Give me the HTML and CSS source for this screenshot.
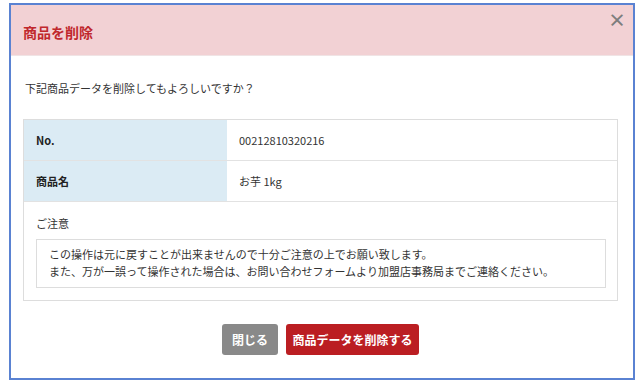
FILE: index.html
```html
<!DOCTYPE html>
<html lang="ja">
<head>
<meta charset="utf-8">
<link rel="stylesheet" href="styles.css">
</head>
<body>
<div class="modal">
  <div class="modal-header">
    <h1 class="modal-title">商品を削除</h1>
    <span class="close">×</span>
  </div>
  <div class="modal-body">
    <p class="message">下記商品データを削除してもよろしいですか？</p>
    <div class="info">
      <div class="row">
        <div class="label">No.</div>
        <div class="value">00212810320216</div>
      </div>
      <div class="row">
        <div class="label">商品名</div>
        <div class="value">お芋 1kg</div>
      </div>
      <div class="notice">
        <div class="notice-title">ご注意</div>
        <div class="notice-box">この操作は元に戻すことが出来ませんので十分ご注意の上でお願い致します。<br>また、万が一誤って操作された場合は、お問い合わせフォームより加盟店事務局までご連絡ください。</div>
      </div>
    </div>
    <div class="actions">
      <button class="btn btn-close">閉じる</button>
      <button class="btn btn-delete">商品データを削除する</button>
    </div>
  </div>
</div>
</body>
</html>
```
FILE: styles.css
```css
html, body {
  margin: 0;
  padding: 0;
  background: #ffffff;
}
body {
  font-family: "Noto Sans CJK JP", "Noto Sans", sans-serif;
  color: #333333;
  padding: 3px 8px 0 9px;
}
.modal {
  width: 622px;
  height: 373px;
  border: 2px solid #5a82d2;
  background: #ffffff;
  display: flex;
  flex-direction: column;
}
.modal-header {
  position: relative;
  height: 50px;
  background: #f2d1d4;
  display: flex;
  align-items: center;
  padding: 0 12px;
  border-bottom: 1px solid #f0e4e5;
}
.modal-title {
  margin: 0;
  font-size: 14px;
  font-weight: bold;
  color: #c0282d;
  line-height: 1;
  position: relative;
  top: 2px;
}
.close {
  position: absolute;
  right: 7px;
  top: 5px;
  font-size: 18px;
  font-weight: bold;
  color: #7d7d7d;
  line-height: 1;
}
.modal-body {
  padding: 0 15px 0 12px;
  display: flex;
  flex-direction: column;
}
.message {
  margin: 24px 0 0 2px;
  font-size: 11px;
  line-height: 17px;
  height: 39px;
}
.info {
  border: 1px solid #dddddd;
}
.row {
  display: flex;
  height: 40px;
  border-bottom: 1px solid #e2e2e2;
}
.label {
  width: 191px;
  background: #dbebf4;
  padding-left: 12px;
  font-size: 11px;
  font-weight: bold;
  display: flex;
  align-items: center;
  color: #222222;
  border-right: 1px solid #ffffff;
}
.value {
  flex: 1;
  padding-left: 11px;
  font-size: 11px;
  display: flex;
  align-items: center;
  color: #333333;
}
.notice {
  padding: 13px 11px 12px 12px;
}
.notice-title {
  font-size: 11px;
  line-height: 17px;
  margin-bottom: 7px;
}
.notice-box {
  border: 1px solid #dddddd;
  padding: 6px 12px 7px 12px;
  font-size: 11px;
  line-height: 17px;
  color: #333333;
}
.actions {
  display: flex;
  justify-content: center;
  gap: 8px;
  margin-top: 23px;
}
.btn {
  height: 31px;
  border: none;
  border-radius: 3px;
  color: #ffffff;
  font-family: "Noto Sans CJK JP", "Noto Sans", sans-serif;
  font-size: 12px;
  font-weight: bold;
  padding: 0;
}
.btn-close {
  background: #898989;
  width: 56px;
}
.btn-delete {
  background: #bb1e22;
  width: 133px;
}
```
